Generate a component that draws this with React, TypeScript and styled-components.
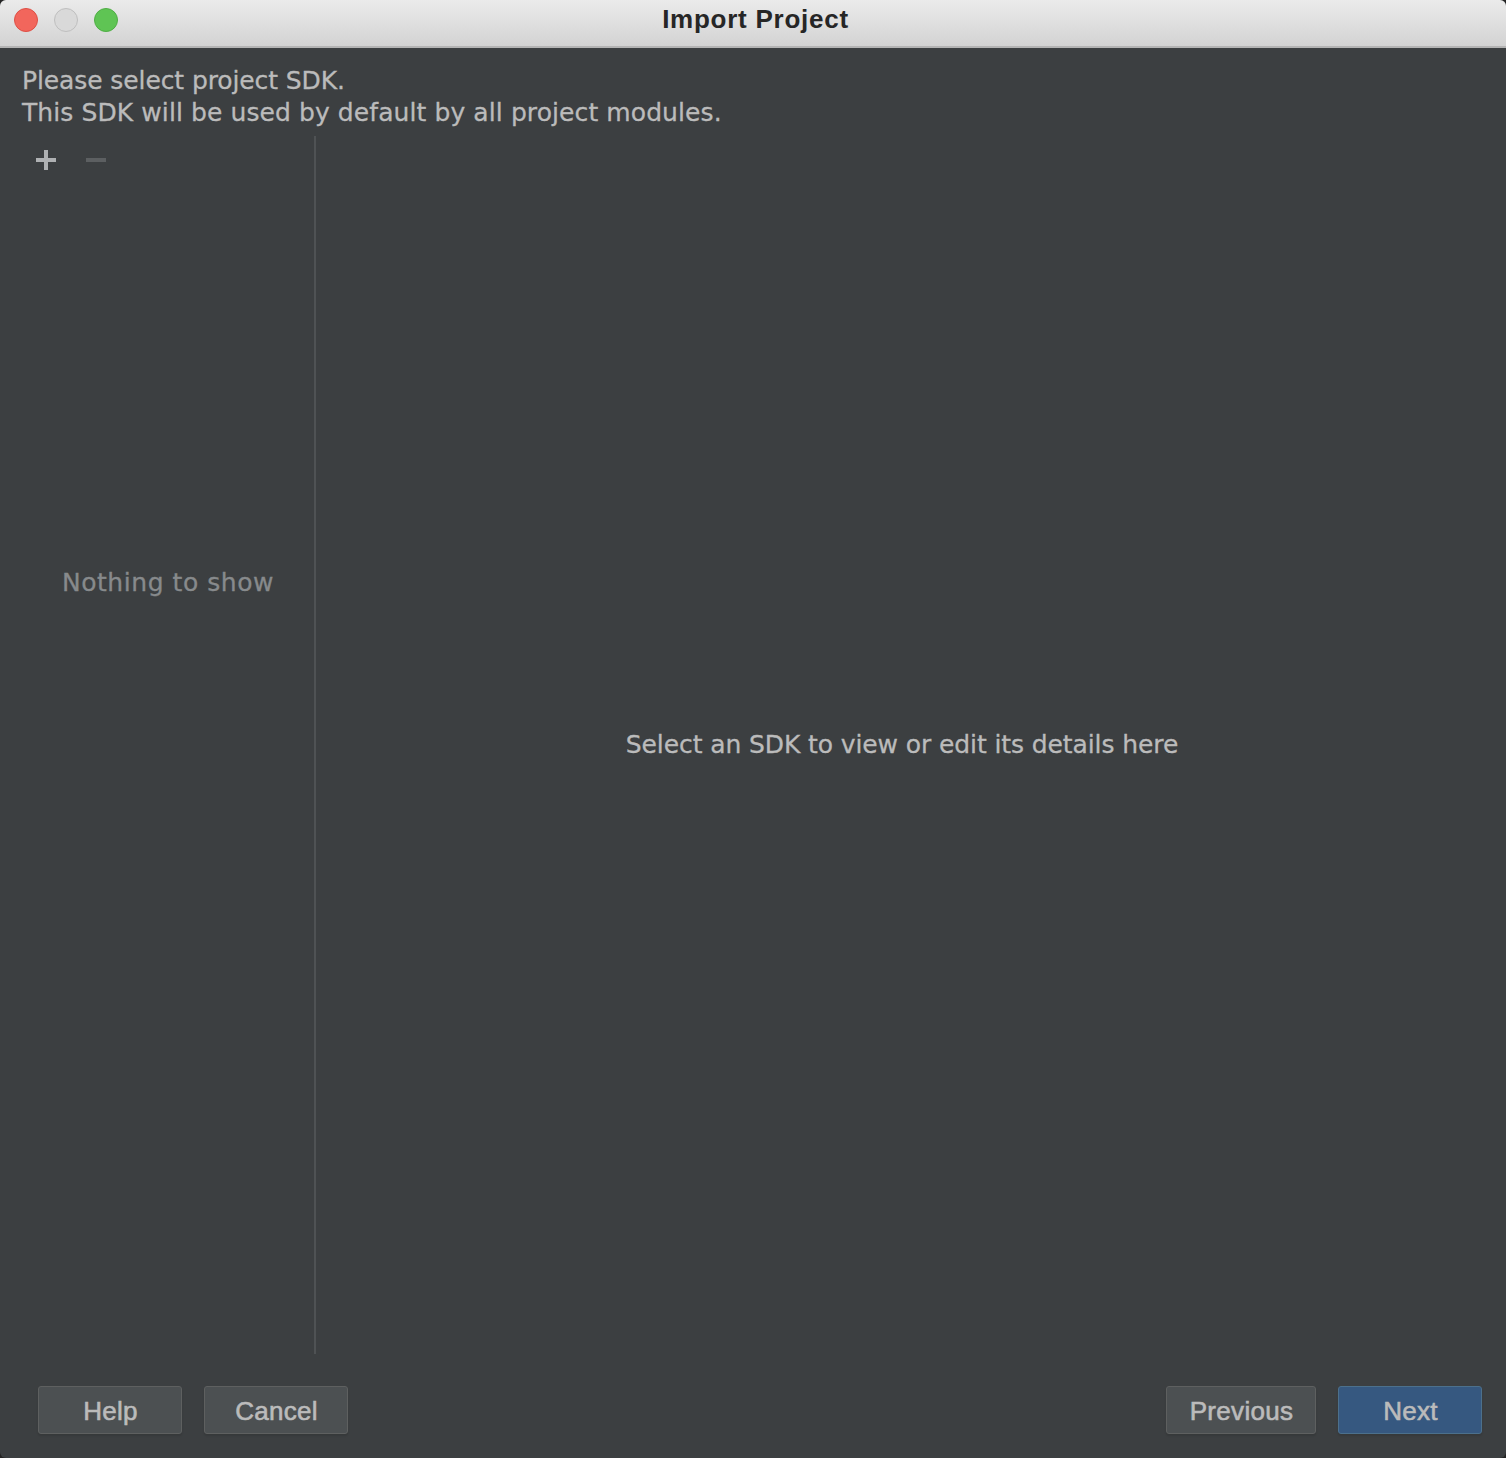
import React from 'react';
import styled, { createGlobalStyle } from 'styled-components';

const GlobalStyle = createGlobalStyle`
  html, body {
    margin: 0;
    padding: 0;
    background: #242424;
  }
`;

export default function App() {
  return (
    <>
      <GlobalStyle />
      <Window>
        <TitleBar>
          <Lights>
            <Light $fill="#f2665c" $edge="#de4f45" />
            <Light $fill="#d9d9d9" $edge="#bfbfbf" />
            <Light $fill="#5fc454" $edge="#4fae45" />
          </Lights>
          <Title>Import Project</Title>
        </TitleBar>
        <Body>
          <Intro>
            <IntroLine $tracking={-0.1}>Please select project SDK.</IntroLine>
            <IntroLine $tracking={0.09}>This SDK will be used by default by all project modules.</IntroLine>
          </Intro>
          <Split>
            <Sidebar>
              <Toolbar>
                <ToolIcon viewBox="0 0 20 20" $color="#afb1b3">
                  <path d="M8 0h4v8h8v4h-8v8H8v-8H0V8h8z" />
                </ToolIcon>
                <ToolIcon viewBox="0 0 20 20" $color="#5c5f61">
                  <path d="M0 8h20v4H0z" />
                </ToolIcon>
              </Toolbar>
              <EmptyList>
                <EmptyText>Nothing to show</EmptyText>
              </EmptyList>
            </Sidebar>
            <Details>
              <DetailsText>Select an SDK to view or edit its details here</DetailsText>
            </Details>
          </Split>
          <Footer>
            <ButtonGroup>
              <Button $width={144}>Help</Button>
              <Button $width={144}>Cancel</Button>
            </ButtonGroup>
            <ButtonGroup>
              <Button $width={150}>Previous</Button>
              <Button $width={144} $primary>
                Next
              </Button>
            </ButtonGroup>
          </Footer>
        </Body>
      </Window>
    </>
  );
}

const Window = styled.div`
  width: 1506px;
  height: 1458px;
  display: flex;
  flex-direction: column;
  overflow: hidden;
  border-radius: 6px;
  background: #3c3f41;
`;

const TitleBar = styled.div`
  position: relative;
  flex: none;
  height: 46px;
  display: flex;
  align-items: center;
  justify-content: center;
  box-sizing: content-box;
  border-bottom: 2px solid #b4b4b4;
  background: linear-gradient(#ebebeb, #d3d3d3);
`;

const Lights = styled.div`
  position: absolute;
  left: 14px;
  top: 8px;
  display: flex;
  gap: 16px;
`;

const Light = styled.span<{ $fill: string; $edge: string }>`
  box-sizing: border-box;
  width: 24px;
  height: 24px;
  border-radius: 50%;
  background: ${(p) => p.$fill};
  border: 1px solid ${(p) => p.$edge};
`;

const Title = styled.div`
  font-family: 'Liberation Sans', Arial, sans-serif;
  font-size: 26px;
  font-weight: 700;
  letter-spacing: 0.75px;
  color: #262626;
  margin: -8px 0 0 5px;
`;

const Body = styled.div`
  flex: 1;
  min-height: 0;
  display: flex;
  flex-direction: column;
  padding: 17px 24px 24px 22px;
`;

const Intro = styled.div`
  flex: none;
  font-family: 'DejaVu Sans', Verdana, sans-serif;
  font-size: 25px;
  line-height: 32px;
  -webkit-text-stroke: 0.3px #bbbbbb;
  color: #bbbbbb;
`;

const IntroLine = styled.div<{ $tracking: number }>`
  letter-spacing: ${(p) => p.$tracking}px;
`;

const Split = styled.div`
  flex: 1;
  min-height: 0;
  display: flex;
  margin-top: 7px;
`;

const Sidebar = styled.div`
  flex: none;
  width: 292px;
  display: flex;
  flex-direction: column;
  border-right: 2px solid #4f5254;
`;

const Toolbar = styled.div`
  flex: none;
  display: flex;
  gap: 30px;
  padding: 14px 0 0 14px;
`;

const ToolIcon = styled.svg<{ $color: string }>`
  width: 20px;
  height: 20px;
  fill: ${(p) => p.$color};
`;

const EmptyList = styled.div`
  flex: 1;
  display: flex;
  justify-content: center;
  align-items: flex-start;
  padding-top: 398px;
`;

const EmptyText = styled.div`
  font-family: 'DejaVu Sans', Verdana, sans-serif;
  font-size: 25px;
  line-height: 30px;
  letter-spacing: 0.55px;
  -webkit-text-stroke: 0.3px #878a8c;
  color: #878a8c;
`;

const Details = styled.div`
  flex: 1;
  display: flex;
  align-items: center;
  justify-content: center;
  padding-left: 6px;
`;

const DetailsText = styled.div`
  font-family: 'DejaVu Sans', Verdana, sans-serif;
  font-size: 25px;
  letter-spacing: -0.1px;
  -webkit-text-stroke: 0.3px #bbbbbb;
  color: #bbbbbb;
  margin-top: -1px;
`;

const Footer = styled.div`
  flex: none;
  display: flex;
  justify-content: space-between;
  margin-top: 32px;
  padding-left: 16px;
`;

const ButtonGroup = styled.div`
  display: flex;
  gap: 22px;
`;

const Button = styled.button<{ $width: number; $primary?: boolean }>`
  width: ${(p) => p.$width}px;
  height: 48px;
  padding: 2px 0 0 1px;
  border-radius: 3px;
  border: 1px solid ${(p) => (p.$primary ? '#4c708c' : '#5e6060')};
  background: ${(p) => (p.$primary ? '#365880' : '#4c5052')};
  box-shadow: 0 2px 2px rgba(0, 0, 0, 0.1);
  font-family: 'Liberation Sans', Arial, sans-serif;
  font-size: 26px;
  letter-spacing: 0.3px;
  -webkit-text-stroke: 0.6px #bbbbbb;
  color: #bbbbbb;
`;
